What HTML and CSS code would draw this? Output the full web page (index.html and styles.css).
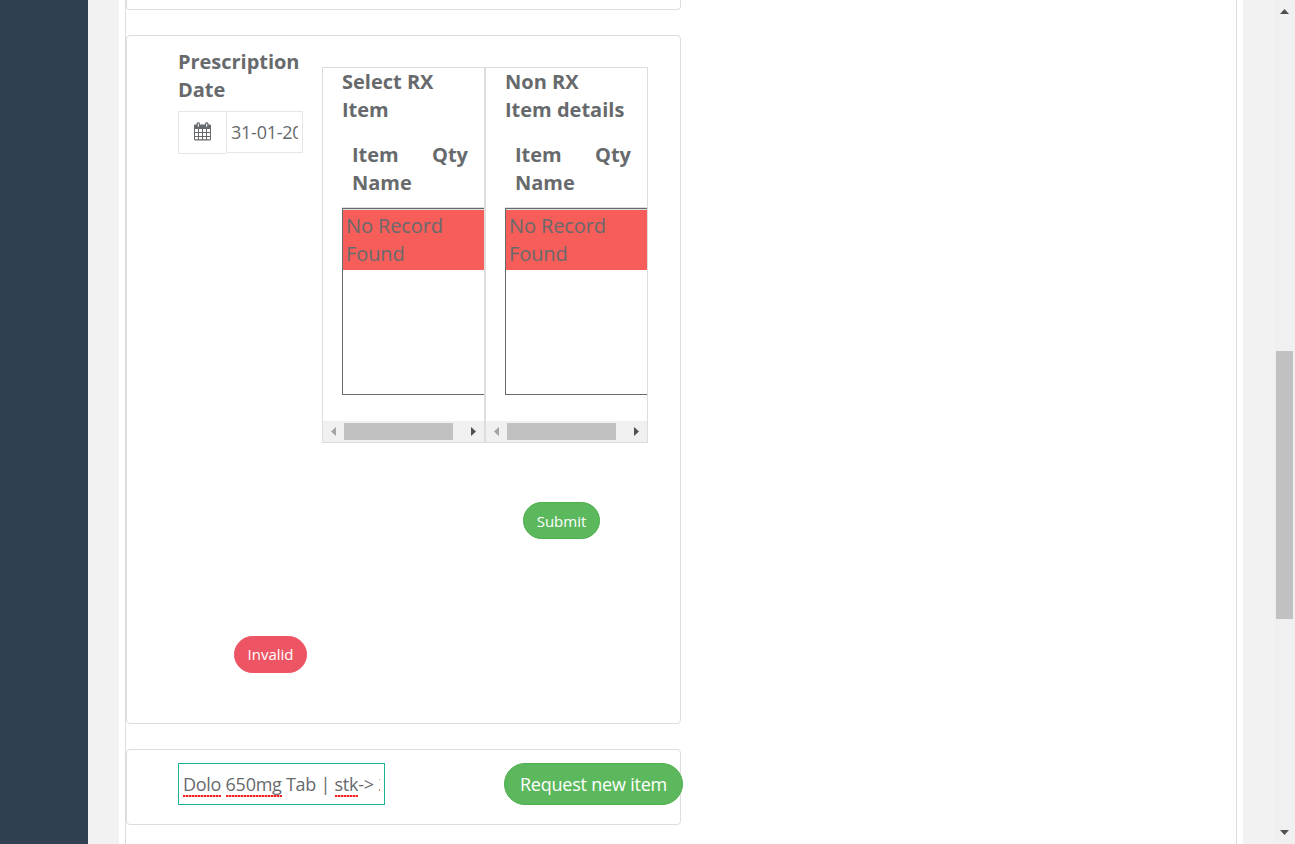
FILE: index.html
```html
<!DOCTYPE html>
<html lang="en">
<head>
<meta charset="utf-8">
<title>Prescription</title>
<link rel="stylesheet" href="styles.css">
</head>
<body>
<div class="app">
  <aside class="sidebar"></aside>
  <main class="page">
    <div class="sheet">
      <div class="content">
        <section class="card card-previous"></section>
        <section class="card card-rx">
          <div class="rx-row">
            <div class="date-field">
              <label class="label" for="date">Prescription Date</label>
              <div class="date-group">
                <span class="addon">
                  <svg width="17" height="19" viewBox="0 0 17 19">
                    <path fill="#676a6c" fill-rule="evenodd" d="M1.200 2.500H2.500V2C2.500.8 3.300.2 4.300.2S6 .8 6 2v.5h5V2c0-1.200.8-1.800 1.800-1.800S14.500.8 14.500 2v.5h1.300c.7 0 1.200.5 1.200 1.200v13.600c0 .7-.5 1.200-1.200 1.200H1.200C.5 18.500 0 18 0 17.300V3.700C0 3 .5 2.500 1.200 2.500zM3.800 1.500v3.300h1V1.500zM12.200 1.500v3.300h1V1.500zM1 7v3h3V7zM5 7v3h3V7zM9 7v3h3V7zM13 7v3h3V7zM1 11v3h3v-3zM5 11v3h3v-3zM9 11v3h3v-3zM13 11v3h3v-3zM1 15v2.200h3V15zM5 15v2.200h3V15zM9 15v2.200h3V15zM13 15v2.200h3V15z"/>
                  </svg>
                </span>
                <div class="date-input" id="date"><span class="clip">31-01-2024</span></div>
              </div>
            </div>
            <div class="panels">
              <div class="panel">
                <div class="panel-body">
                  <div class="panel-title">Select RX<br>Item</div>
                  <div class="columns"><span class="col-name">Item Name</span><span>Qty</span></div>
                  <div class="list"><div class="empty">No Record Found</div></div>
                </div>
                <div class="hscroll">
                  <svg class="arrow" width="5" height="9" viewBox="0 0 5 9"><path fill="#a3a3a3" d="M5 0v9L0 4.500z"/></svg>
                  <div class="hthumb"></div>
                  <svg class="arrow" width="5" height="9" viewBox="0 0 5 9"><path fill="#505050" d="M0 0v9l5-4.500z"/></svg>
                </div>
              </div>
              <div class="panel">
                <div class="panel-body">
                  <div class="panel-title">Non RX<br>Item details</div>
                  <div class="columns"><span class="col-name">Item Name</span><span>Qty</span></div>
                  <div class="list"><div class="empty">No Record Found</div></div>
                </div>
                <div class="hscroll">
                  <svg class="arrow" width="5" height="9" viewBox="0 0 5 9"><path fill="#a3a3a3" d="M5 0v9L0 4.500z"/></svg>
                  <div class="hthumb"></div>
                  <svg class="arrow" width="5" height="9" viewBox="0 0 5 9"><path fill="#505050" d="M0 0v9l5-4.500z"/></svg>
                </div>
              </div>
            </div>
          </div>
          <button class="btn btn-submit">Submit</button>
          <button class="btn btn-invalid">Invalid</button>
        </section>
        <section class="card card-search">
          <div class="search"><span class="clip"><span class="misspelt">Dolo</span> <span class="misspelt">650mg</span> Tab | <span class="misspelt">stk</span>-&gt; 25</span></div>
          <button class="btn btn-request">Request new item</button>
        </section>
      </div>
    </div>
  </main>
  <div class="vscroll">
    <svg width="9" height="5" viewBox="0 0 9 5"><path fill="#505050" d="M0 5h9L4.500 0z"/></svg>
    <div class="vthumb"></div>
    <svg width="9" height="5" viewBox="0 0 9 5"><path fill="#505050" d="M0 0h9L4.500 5z"/></svg>
  </div>
</div>
</body>
</html>
```
FILE: styles.css
```css
* { box-sizing: border-box; }
body {
  margin: 0;
  overflow: hidden;
  font-family: "Open Sans", sans-serif;
  font-size: 20px;
  line-height: 28px;
  color: #676a6c;
}
svg { display: block; flex: none; }
.app { display: flex; height: 844px; }
.sidebar { width: 88px; background: #2f4050; }
.page { width: 1186px; padding: 0 31px; background: #f2f2f2; }
.sheet { height: 844px; padding: 0 6px; background: #fff; }
.content { height: 844px; border: solid #ddd; border-width: 0 1px; }
.card { width: 555px; border: 1px solid #ddd; border-radius: 4px; margin-bottom: 25px; }
.card-previous { height: 10px; border-top: 0; border-radius: 0 0 4px 4px; }
.card-rx { height: 689px; padding: 12px 0 0 51px; display: flex; flex-direction: column; align-items: flex-start; }
.rx-row { display: flex; align-items: flex-start; }
.date-field { width: 125px; }
.label { display: block; font-weight: 700; letter-spacing: -0.03px; }
.date-group { display: flex; align-items: flex-start; margin-top: 7px; }
.addon {
  width: 48px; height: 43px; padding-bottom: 2px;
  display: flex; justify-content: center; align-items: center;
  border: 1px solid #e5e6e7; border-right: 0;
}
.date-input {
  width: 77px; height: 42px; padding: 6px 4px;
  border: 1px solid #e5e6e7;
  font-size: 18px; letter-spacing: -0.25px;
}
.clip { display: block; overflow: hidden; white-space: nowrap; }
.panels { display: flex; margin: 19px 0 0 19px; }
.panel { width: 163px; height: 376px; border: 1px solid #ddd; }
.panel-body { height: 353px; padding-left: 19px; overflow: hidden; }
.panel-title { font-weight: 700; }
.columns { display: flex; margin-top: 17px; height: 67px; padding-left: 10px; font-weight: 700; border-bottom: 1px solid #ddd; }
.col-name { width: 80px; padding-right: 10px; }
.list { width: 200px; height: 187px; border: 1px solid #676a6c; }
.empty { height: 61px; padding: 2px 60px 3px 3px; background: #f75d59; border-top: 1px solid #ddd; letter-spacing: -0.1px; }
.hscroll { height: 21px; padding: 0 8px; display: flex; align-items: center; background: #f0f0f0; }
.hthumb { width: 109px; height: 17px; margin: 0 18px 0 8px; background: #c1c1c1; }
.btn {
  flex: none; padding: 0; color: #fff; background: #5cb85c;
  border: 1px solid #4cae4c; border-radius: 19px;
  font: 15px/20px "Open Sans", sans-serif; white-space: nowrap;
}
.btn-submit { width: 77px; height: 37px; margin: 59px 0 0 345px; }
.btn-invalid { width: 73px; height: 37px; margin: 97px 0 0 56px; padding-bottom: 2px; background: #ed5565; border-color: #ed5565; }
.card-search { height: 76px; padding: 13px 0 0 51px; display: flex; align-items: flex-start; }
.search { width: 207px; height: 42px; padding: 6px 4px; border: 1px solid #1ab394; font-size: 18px; letter-spacing: -0.27px; }
.misspelt {
  padding-bottom: 1px;
  background: repeating-linear-gradient(90deg, #e22 0 2px, #f99 2px 3px) left bottom / 100% 2px no-repeat;
}
.btn-request { width: 179px; height: 42px; margin-left: 119px; border-radius: 21px; font-size: 18px; letter-spacing: -0.22px; }
.vscroll { width: 21px; padding: 9px 2px; display: flex; flex-direction: column; align-items: center; background: #f0f0f0; }
.vthumb { width: 17px; height: 268px; margin: 337px 0 211px; background: #c1c1c1; }
```
